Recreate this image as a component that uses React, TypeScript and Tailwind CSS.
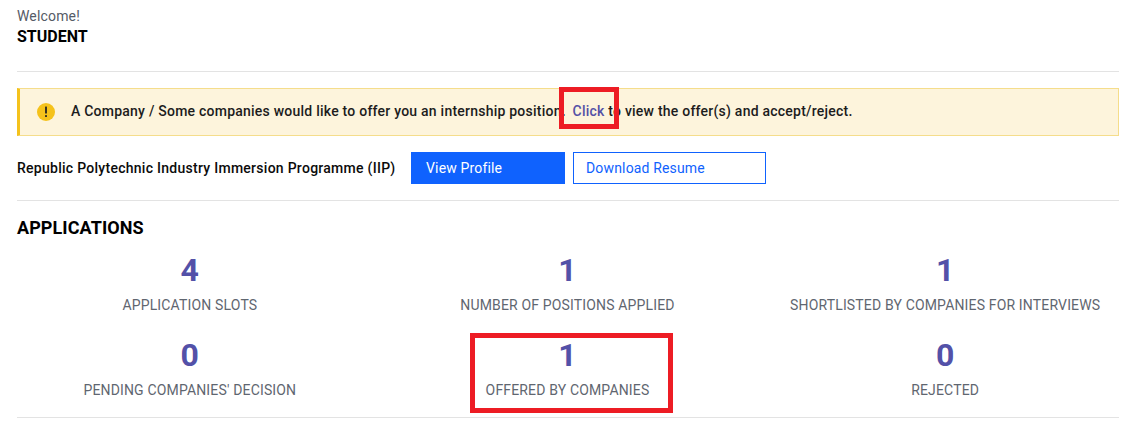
const stats = [
  { value: "4", label: "APPLICATION SLOTS" },
  { value: "1", label: "NUMBER OF POSITIONS APPLIED" },
  { value: "1", label: "SHORTLISTED BY COMPANIES FOR INTERVIEWS" },
  { value: "0", label: "PENDING COMPANIES' DECISION" },
  { value: "1", label: "OFFERED BY COMPANIES" },
  { value: "0", label: "REJECTED" },
]

export default function App() {
  return (
    <div className="relative h-[441px] w-[1145px] overflow-hidden bg-white pl-[17px] pr-[26px] pt-[8px] font-['Roboto',sans-serif] text-[14px] tracking-[0.16px] text-black">
      <div className="text-[14px] leading-[17px] text-[#555b66]">Welcome!</div>
      <div className="mt-[2px] text-[16px] font-bold leading-[19px] tracking-normal">STUDENT</div>

      <div className="mt-[25px] h-px bg-[#e3e3e3]" />

      <div className="mt-[16px] flex h-[48px] items-center border border-l-[3px] border-[#f5dd8b] border-l-[#f4c21c] bg-[#fdf4dc] pl-[17px]">
        <svg width="18" height="18" viewBox="0 0 18 18" className="shrink-0">
          <circle cx="9" cy="9" r="9" fill="#f5c21b" />
          <rect x="8" y="3.5" width="2" height="7" rx="0.5" fill="#3a3320" />
          <rect x="8" y="12" width="2" height="2" rx="0.5" fill="#3a3320" />
        </svg>
        <p className="mb-[2px] ml-[16px] font-medium tracking-[0.23px] text-[#1c1c1c]">
          A Company / Some companies would like to offer you an internship position.{" "}
          <a className="ml-[3px] text-[#5451a6]">Click</a> to view the offer(s) and accept/reject.
        </p>
      </div>

      <div className="mt-[16px] flex items-center">
        <span className="w-[394px] font-medium tracking-[0.27px] text-[#0b0b0b]">Republic Polytechnic Industry Immersion Programme (IIP)</span>
        <button className="h-[32px] w-[154px] bg-[#0f62fe] pl-[15px] text-left text-white">View Profile</button>
        <button className="ml-[8px] h-[32px] w-[193px] border border-[#0f62fe] pl-[12px] text-left text-[#0f62fe]">
          Download Resume
        </button>
      </div>

      <div className="mt-[16px] h-px bg-[#e3e3e3]" />

      <h2 className="mt-[16px] text-[18px] font-bold leading-[21px] tracking-[0.08px]">APPLICATIONS</h2>

      <div className="-ml-[16px] -mr-[15px] mt-[14px] grid grid-cols-3 gap-y-[23px]">
        {stats.map((s) => (
          <div key={s.label} className="flex flex-col items-center">
            <div className="text-[32px] font-bold leading-[37px] text-[#5351a8]">{s.value}</div>
            <div className="mt-[8px] leading-[17px] text-[#5f6670]">{s.label}</div>
          </div>
        ))}
      </div>

      <div className="mt-[18px] h-px bg-[#e3e3e3]" />

      {/* red annotation boxes */}
      <div className="absolute left-[559px] top-[87px] h-[42px] w-[60px] border-[5px] border-[#ed1c24]" />
      <div className="absolute left-[470px] top-[333px] h-[80px] w-[203px] border-[5px] border-[#ed1c24]" />
    </div>
  )
}
